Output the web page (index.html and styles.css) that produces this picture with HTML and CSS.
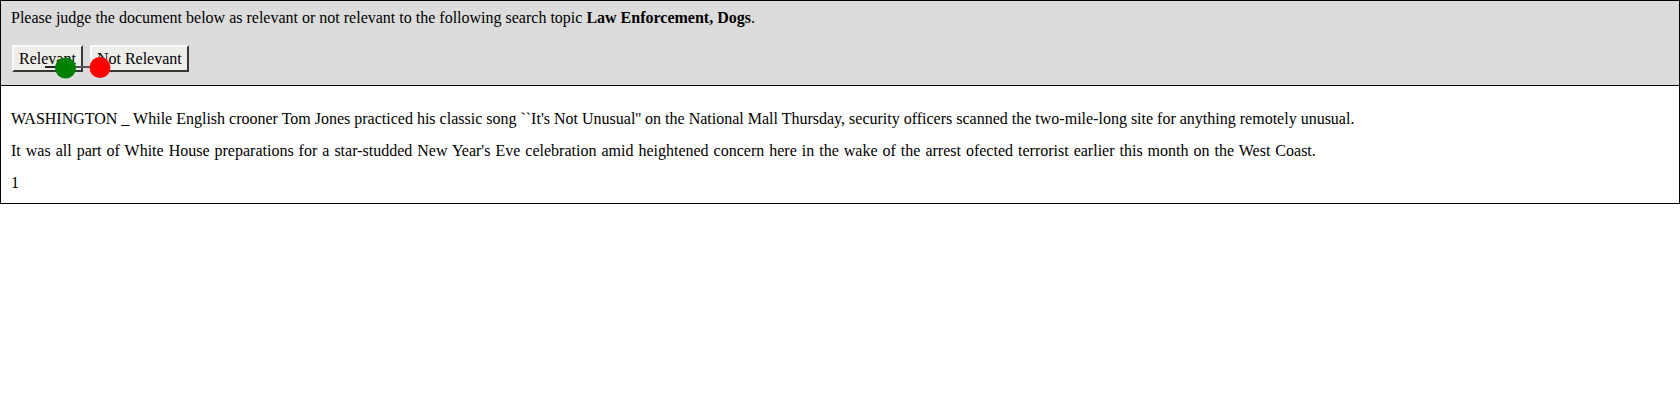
FILE: index.html
```html
<!DOCTYPE html>
<html>
<head>
<meta charset="utf-8">
<link rel="stylesheet" href="styles.css">
</head>
<body>
<div class="page">
  <div class="header">
    <p class="prompt">Please judge the document below as relevant or not relevant to the following search topic <b>Law Enforcement, Dogs</b>.</p>
    <div class="buttons">
      <button class="btn">Relevant</button>
      <button class="btn">Not Relevant</button>
    </div>
    <svg class="marks" width="120" height="30" viewBox="0 0 120 30">
      <line x1="44" y1="15" x2="64" y2="15" stroke="#222" stroke-width="2"/>
      <line x1="64" y1="15" x2="99" y2="15" stroke="#555" stroke-width="2"/>
      <circle cx="64.5" cy="16" r="10.5" fill="#008000"/>
      <circle cx="99" cy="15.5" r="10.5" fill="#ff0000"/>
    </svg>
  </div>
  <div class="doc">
    <p>WASHINGTON _ While English crooner Tom Jones practiced his classic song ``It's Not Unusual'' on the National Mall Thursday, security officers scanned the two-mile-long site for anything remotely unusual.</p>
    <p class="spread">It was all part of White House preparations for a star-studded New Year's Eve celebration amid heightened concern here in the wake of the arrest ofected terrorist earlier this month on the West Coast.</p>
    <p>1</p>
  </div>
</div>
</body>
</html>
```
FILE: styles.css
```css
html, body {
  margin: 0;
  padding: 0;
  background: #fff;
}
body {
  font-family: "Liberation Serif", "Times New Roman", serif;
  font-size: 16px;
  line-height: 18px;
  color: #000;
}
.page {
  width: 1680px;
}
.header {
  position: relative;
  background: #dcdcdc;
  border: 1px solid #000;
  padding: 8px 10px 13px 10px;
}
.prompt {
  margin: 0 0 18px 0;
}
.buttons {
  display: flex;
  gap: 7px;
  padding-left: 1px;
}
.btn {
  font-family: "Liberation Serif", "Times New Roman", serif;
  font-size: 16px;
  line-height: 18px;
  height: 27px;
  padding: 2px 5px;
  background: #efedea;
  color: #000;
  border: 2px outset #d8d6d2;
  border-right-color: #8a8a8a;
  border-bottom-color: #8a8a8a;
  border-top-color: #fbfbfb;
  border-left-color: #fbfbfb;
  border-radius: 0;
}
.marks {
  position: absolute;
  left: 0;
  top: 51px;
}
.doc {
  border: 1px solid #000;
  border-top: none;
  padding: 24px 10px 11px 10px;
}
.doc p {
  margin: 0 0 14px 0;
}
.doc p:last-child {
  margin-bottom: 0;
}
.doc .spread {
  word-spacing: 1px;
}
```
